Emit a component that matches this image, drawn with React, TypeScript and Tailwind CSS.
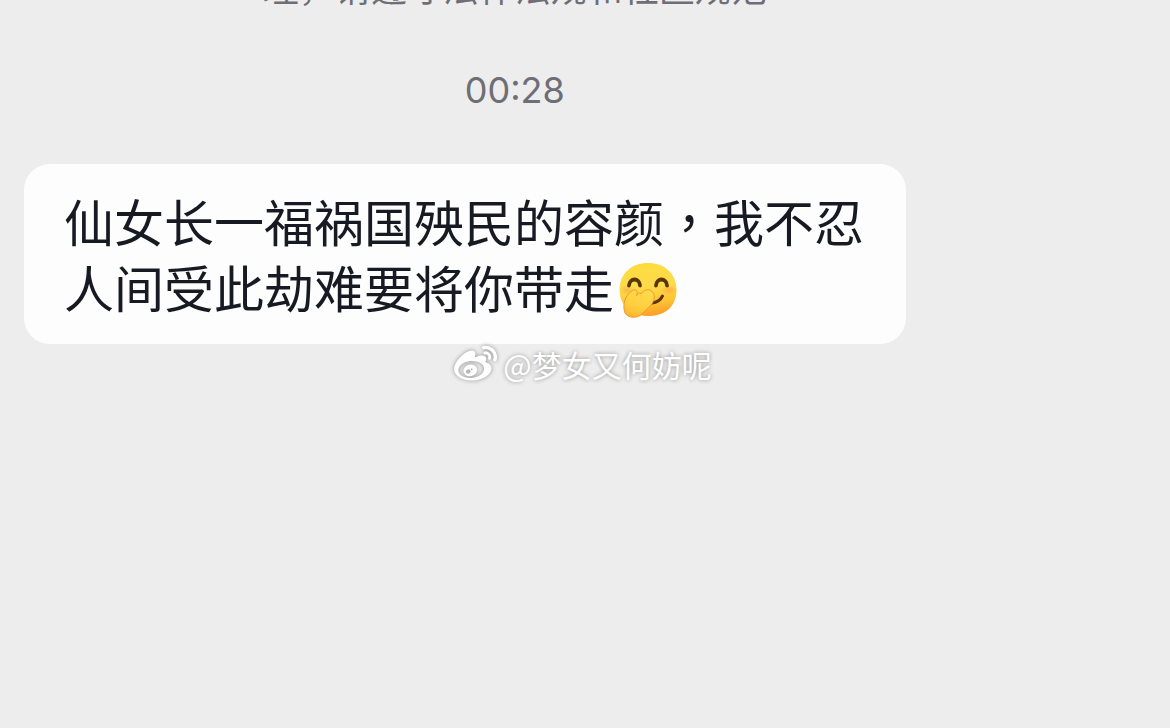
import { FaWeibo } from 'react-icons/fa';

const message = {
  before: '仙女长一福祸国殃民的容颜',
  after: '我不忍人间受此劫难要将你带走',
};

function GiggleEmoji() {
  return (
    <svg viewBox="0 0 60 60" className="-mt-4 -mb-2 ml-1 inline-block size-[60px] align-middle" role="img" aria-label="捂嘴笑">
      <defs>
        <linearGradient id="face" x1="0" y1="0" x2="0.15" y2="1">
          <stop offset="0" stopColor="#fddc3c" />
          <stop offset="0.5" stopColor="#fedb4c" />
          <stop offset="0.8" stopColor="#fdc534" />
          <stop offset="1" stopColor="#fba62b" />
        </linearGradient>
        <linearGradient id="hand" x1="0.7" y1="0" x2="0.3" y2="1">
          <stop offset="0" stopColor="#ffdb4d" />
          <stop offset="0.6" stopColor="#ffcf40" />
          <stop offset="1" stopColor="#fdb52c" />
        </linearGradient>
        <radialGradient id="blush">
          <stop offset="0" stopColor="#fb9a3c" stopOpacity="0.55" />
          <stop offset="1" stopColor="#fb9a3c" stopOpacity="0" />
        </radialGradient>
      </defs>
      <path d="M30 3C46 3 58.5 13 58.5 30C58.5 47 46 56 31 56C14 56 1.5 46 1.5 30C1.5 13 14 3 30 3Z" fill="url(#face)" />
      <ellipse cx="9" cy="30" rx="8" ry="5" fill="url(#blush)" />
      <ellipse cx="51" cy="30" rx="8" ry="5" fill="url(#blush)" />
      <g fill="none" stroke="#5b3503" strokeLinecap="round">
        <path d="M11 25.5C11.5 17.5 21.5 17.5 22 25.5" strokeWidth="3.8" />
        <path d="M38 25.5C38.5 17.5 48.5 17.5 49 25.5" strokeWidth="3.8" />
        <path d="M34 43C39 42.5 42.5 40 44.5 36" strokeWidth="3" />
      </g>
      <path
        d="M7 53C4 45 7 35 14.5 30.500C18 28.5 20.500 31 18.500 35.500C21.500 31.500 23 33 23 34C25.500 29.500 31 28.500 34 31.500C37.500 35 36.500 41 33 45C30 48.500 27 50.500 24 54C20 58.5 10 58.500 7 53Z"
        fill="url(#hand)"
        stroke="#f0912a"
        strokeWidth="0.9"
      />
    </svg>
  );
}

function Watermark() {
  return (
    <div className="pointer-events-none absolute inset-0 flex items-center justify-center gap-1.5 pr-1 text-white">
      <FaWeibo className="size-[43px] drop-shadow-[0_0_2px_rgba(0,0,0,0.4)]" aria-hidden="true" />
      <span className="text-[30px] leading-9 whitespace-nowrap [text-shadow:0_0_4px_rgba(0,0,0,0.4)]">@梦女又何妨呢</span>
    </div>
  );
}

export default function App() {
  return (
    <div className="relative min-h-screen overflow-hidden bg-[#ededed] font-['Noto_Sans_CJK_SC',sans-serif]" lang="zh-CN">
      <main className="w-[88%]">
        <div className="flex h-2.5 items-end justify-center overflow-hidden">
          <p className="shrink-0 text-4xl leading-[48px] whitespace-nowrap text-[#6e6e76]">理，请遵守法律法规和社区规范</p>
        </div>

        <div className="pt-14 text-center">
          <time className="block font-['Inter',sans-serif] text-4xl leading-[48px] text-[#6e6e76]">00:28</time>
        </div>

        <div className="mt-[50px] ml-6 w-fit max-w-[882px] rounded-[26px] bg-[#fdfdfd] px-10 pt-[23px] pb-[25px]">
          <p className="text-[50px] leading-[66px] break-all text-[#171923]">
            {message.before}
            <span className="font-['Noto_Sans_CJK_TC',sans-serif]" lang="zh-TW">，</span>
            {message.after}
            <GiggleEmoji />
          </p>
        </div>
      </main>

      <Watermark />
    </div>
  );
}
